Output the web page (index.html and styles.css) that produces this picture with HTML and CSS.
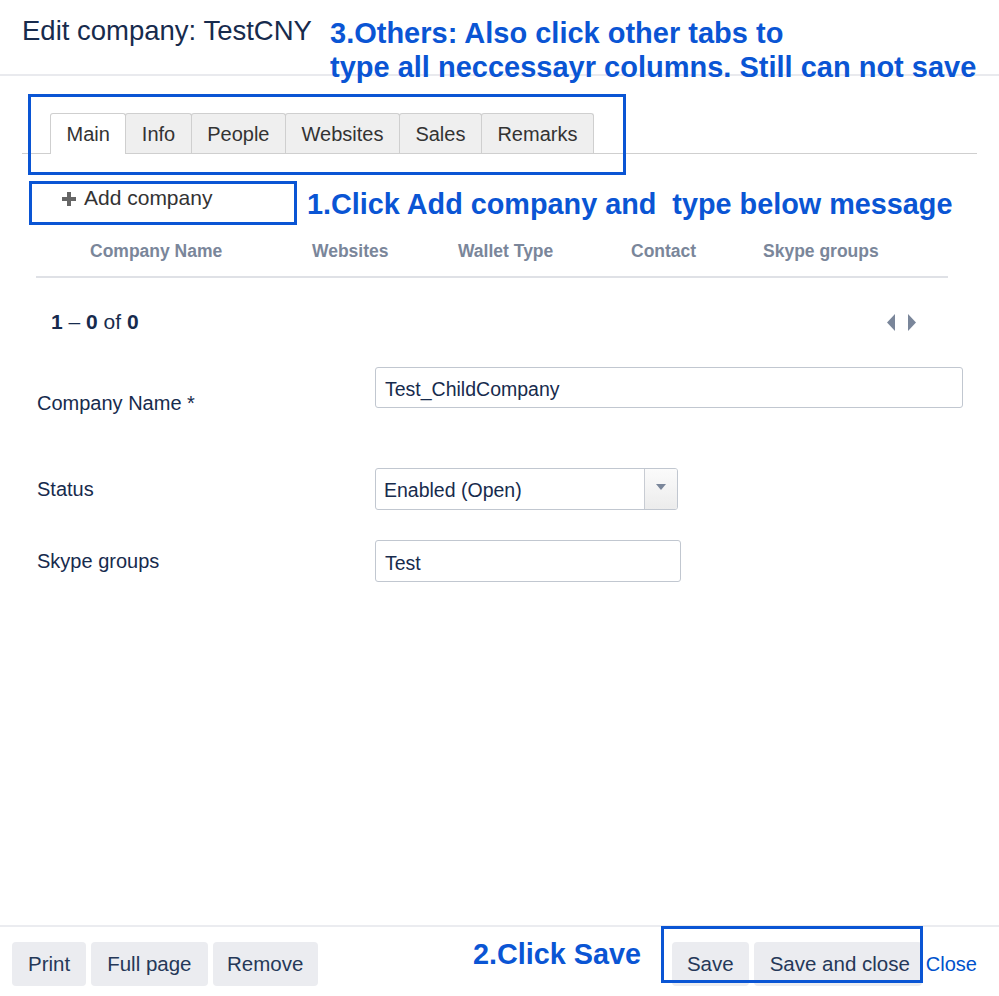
FILE: index.html
```html
<!DOCTYPE html>
<html lang="en">
<head>
<meta charset="utf-8">
<title>Edit company: TestCNY</title>
<link rel="stylesheet" href="styles.css">
</head>
<body>
<div class="page">
  <header class="header">
    <h1 class="title">Edit company: TestCNY</h1>
  </header>

  <nav class="tabs">
    <div class="tab active">Main</div>
    <div class="tab">Info</div>
    <div class="tab">People</div>
    <div class="tab">Websites</div>
    <div class="tab">Sales</div>
    <div class="tab">Remarks</div>
  </nav>

  <div class="add-row">
    <svg class="plus" width="16" height="16" viewBox="0 0 16 16"><path d="M6 1h4v5h5v4h-5v5H6v-5H1V6h5z" fill="#666"/></svg>
    <span>Add company</span>
  </div>

  <div class="table-head">
    <span>Company Name</span>
    <span>Websites</span>
    <span>Wallet Type</span>
    <span>Contact</span>
    <span>Skype groups</span>
  </div>

  <div class="pager">
    <span class="count"><b>1</b> – <b>0</b> of <b>0</b></span>
    <span class="arrows">
      <svg width="9" height="17" viewBox="0 0 9 17"><path d="M8 0v17L0 8.5z" fill="#7a869a"/></svg>
      <svg width="9" height="17" viewBox="0 0 9 17"><path d="M1 0v17l8-8.5z" fill="#7a869a"/></svg>
    </span>
  </div>

  <div class="form">
    <div class="row row-name">
      <label class="label">Company Name *</label>
      <div class="field field-wide">Test_ChildCompany</div>
    </div>
    <div class="row row-status">
      <label class="label">Status</label>
      <div class="select">
        <span class="select-value">Enabled (Open)</span>
        <span class="select-btn"><svg width="10" height="6" viewBox="0 0 10 6"><path d="M0 0h10L5 6z" fill="#7a869a"/></svg></span>
      </div>
    </div>
    <div class="row row-skype">
      <label class="label">Skype groups</label>
      <div class="field field-skype">Test</div>
    </div>
  </div>

  <footer class="footer">
    <div class="btn-group">
      <button class="btn">Print</button>
      <button class="btn">Full page</button>
      <button class="btn btn-remove">Remove</button>
    </div>
    <div class="btn-group right">
      <button class="btn btn-save">Save</button>
      <button class="btn btn-saveclose">Save and close</button>
      <a class="close-link">Close</a>
    </div>
  </footer>

  <div class="note note-3">3.Others: Also click other tabs to<br>type all neccessayr columns. Still can not save</div>
  <div class="note note-1">1.Click Add company and&nbsp; type below message</div>
  <div class="note note-2">2.Click Save</div>
  <div class="mark mark-tabs"></div>
  <div class="mark mark-add"></div>
  <div class="mark mark-save"></div>
</div>
</body>
</html>
```

FILE: styles.css
```css
* { box-sizing: border-box; }
html, body { margin: 0; padding: 0; background: #fff; }
body {
  font-family: "Liberation Sans", Arial, sans-serif;
  color: #172b4d;
}
.page {
  position: relative;
  width: 999px;
  height: 996px;
  display: flex;
  flex-direction: column;
  overflow: hidden;
}
.header {
  height: 76px;
  border-bottom: 2px solid #e9eaee;
  padding: 15px 0 0 22px;
}
.title {
  margin: 0;
  font-size: 27.5px;
  font-weight: normal;
  line-height: 32px;
  color: #172b4d;
}
.tabs {
  margin: 37px 22px 0 22px;
  padding-left: 28px;
  display: flex;
  border-bottom: 1px solid #cfcfcf;
  height: 41px;
}
.tab {
  height: 40px;
  padding: 1px 15.5px 0;
  border: 1px solid #cfcfcf;
  border-bottom: none;
  border-radius: 3px 3px 0 0;
  background: #efefef;
  font-size: 20px;
  line-height: 39px;
  color: #333;
  margin-left: -1px;
}
.tab:first-child { margin-left: 0; }
.tab.active {
  background: #fff;
  height: 41px;
}
.add-row {
  margin-top: 22px;
  height: 44px;
  padding-left: 61px;
  display: flex;
  align-items: center;
  gap: 7px;
  font-size: 21px;
  color: #333;
}
.plus { display: block; margin-top: 2px; }
.table-head {
  margin: 0 51px 0 36px;
  padding: 20px 0 14px 54px;
  border-bottom: 2px solid #dfe1e6;
  display: grid;
  grid-template-columns: 222px 146px 173px 132px 1fr;
  font-size: 17.5px;
  font-weight: bold;
  line-height: 22px;
  color: #7a869a;
}
.pager {
  margin: 22px 51px 0 36px;
  height: 44px;
  padding: 0 32px 0 15px;
  display: flex;
  align-items: center;
  justify-content: space-between;
  font-size: 21px;
  color: #172b4d;
}
.arrows { display: flex; gap: 11px; }
.arrows svg { display: block; }
.form {
  padding-left: 37px;
  margin-top: 23px;
}
.row {
  display: grid;
  grid-template-columns: 338px auto;
  justify-content: start;
}
.label {
  font-size: 20px;
  line-height: 24px;
  color: #172b4d;
}
.row-name { align-items: start; }
.row-name .label { padding-top: 24px; }
.row-status { margin-top: 53px; align-items: center; }
.row-skype { margin-top: 30px; align-items: center; }
.field {
  height: 41px;
  border: 1px solid #c1c7d0;
  border-radius: 3px;
  padding: 2px 9px 0;
  font-size: 19.5px;
  line-height: 39px;
  color: #172b4d;
}
.field-wide { width: 588px; }
.field-skype { width: 306px; height: 42px; line-height: 41px; }
.select {
  width: 303px;
  height: 42px;
  border: 1px solid #c1c7d0;
  border-radius: 3px;
  display: flex;
  overflow: hidden;
}
.select-value {
  flex: 1;
  padding: 1px 0 0 8px;
  font-size: 19.5px;
  line-height: 40px;
}
.select-btn {
  width: 33px;
  border-left: 1px solid #c8ccd3;
  background: linear-gradient(#fbfbfb, #ececec);
  display: flex;
  align-items: center;
  justify-content: center;
}
.select-btn svg { display: block; margin-top: -4px; }
.footer {
  margin-top: auto;
  border-top: 2px solid #ebecf0;
  padding: 15px 22px 10px 12px;
  display: flex;
  justify-content: space-between;
}
.btn-group { display: flex; gap: 5px; align-items: center; }
.btn {
  height: 44px;
  padding: 0 16px;
  border: none;
  border-radius: 4px;
  background: #ebecf0;
  font-family: "Liberation Sans", Arial, sans-serif;
  font-size: 20.5px;
  color: #253858;
}
.btn-remove { padding: 0 14.5px; }
.btn-save { padding: 0 15px; }
.btn-saveclose { padding: 0 12px 0 16px; }
.close-link {
  margin-left: -1px;
  font-size: 20px;
  color: #0052cc;
}
.note {
  position: absolute;
  font-weight: bold;
  color: #0a55d4;
  font-size: 29px;
  line-height: 34px;
  white-space: nowrap;
}
.note-3 { left: 330px; top: 16px; }
.note-1 { left: 307px; top: 187px; font-size: 28.8px; }
.note-2 { left: 473px; top: 937px; font-size: 28.8px; }
.mark {
  position: absolute;
  border: 3px solid #0a55d4;
}
.mark-tabs { left: 28px; top: 94px; width: 598px; height: 81px; }
.mark-add { left: 29px; top: 181px; width: 268px; height: 44px; }
.mark-save { left: 661px; top: 926px; width: 262px; height: 57px; }
```
